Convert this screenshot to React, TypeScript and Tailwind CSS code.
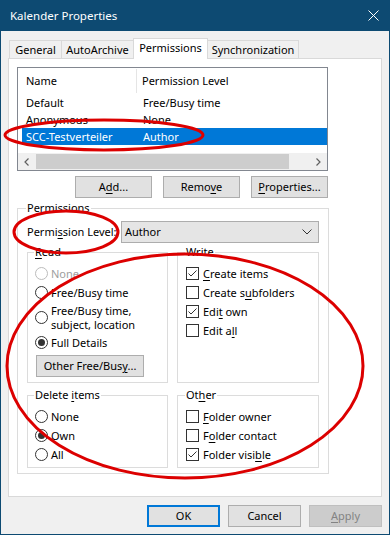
import React from 'react';

// Outlook folder properties dialog, Permissions tab.

function U({ children }: { children: React.ReactNode }) {
  return <span className="underline decoration-1 underline-offset-2">{children}</span>;
}

function Radio({ checked = false, disabled = false }: { checked?: boolean; disabled?: boolean }) {
  return (
    <span
      className={`w-[13px] h-[13px] shrink-0 rounded-full border bg-white flex items-center justify-center ${
        disabled ? 'border-[#bcbcbc]' : 'border-[#333333]'
      }`}
    >
      {checked && <span className="w-[7px] h-[7px] rounded-full bg-[#333333]" />}
    </span>
  );
}

function Check({ checked = false }: { checked?: boolean }) {
  return (
    <span className="w-[13px] h-[13px] shrink-0 border border-[#333333] bg-white flex items-center justify-center">
      {checked && (
        <svg width="11" height="11" viewBox="0 0 11 11">
          <polyline points="1.5,5.5 4,8 9.5,2.5" fill="none" stroke="#333333" strokeWidth="1" />
        </svg>
      )}
    </span>
  );
}

function Btn({ children, className = '' }: { children: React.ReactNode; className?: string }) {
  return (
    <div className={`h-[22px] border border-[#adadad] bg-[#e1e1e1] flex items-center justify-center ${className}`}>
      {children}
    </div>
  );
}

function Group({ label, className, children }: { label: React.ReactNode; className: string; children: React.ReactNode }) {
  return (
    <fieldset className={`border border-[#dcdcdc] ${className}`}>
      <legend className="leading-[16px] px-px -ml-px">{label}</legend>
      <div className="mt-[4px] flex flex-col">{children}</div>
    </fieldset>
  );
}

function RadioRow({ children, checked, disabled }: { children: React.ReactNode; checked?: boolean; disabled?: boolean }) {
  return (
    <div className={`h-[19px] flex items-center gap-[3px] ${disabled ? 'text-[#a0a0a0]' : ''}`}>
      <Radio checked={checked} disabled={disabled} />
      <span>{children}</span>
    </div>
  );
}

function CheckRow({ children, checked }: { children: React.ReactNode; checked?: boolean }) {
  return (
    <div className="h-[19px] flex items-center gap-[4px]">
      <Check checked={checked} />
      <span>{children}</span>
    </div>
  );
}

const rows = [
  { name: 'Default', level: 'Free/Busy time' },
  { name: 'Anonymous', level: 'None' },
  { name: 'SCC-Testverteiler', level: 'Author', selected: true },
];

export default function App() {
  return (
    <div className="relative w-[390px] h-[535px] bg-[#0d4a72] flex flex-col px-px pb-px font-['Noto_Sans',sans-serif] text-[11px] leading-[16px] text-black whitespace-nowrap">
      <div className="h-[31px] shrink-0 -mx-px flex items-center justify-between pl-[10px] pr-[11px] text-white text-[11.5px]">
        <span>Kalender Properties</span>
        <svg width="11" height="11" viewBox="0 0 11 11">
          <path d="M0.5 0.5 L10.5 10.5 M10.5 0.5 L0.5 10.5" stroke="#ffffff" strokeWidth="1" />
        </svg>
      </div>

      <div className="flex-1 bg-[#f0f0f0] flex flex-col">
        {/* tab strip */}
        <div className="mt-[7px] ml-[8px] h-[20px] flex items-end">
          <div className="w-[52px] h-[18px] border-t border-l border-[#d9d9d9] flex items-center justify-center pt-px">General</div>
          <div className="w-[72px] h-[18px] border-t border-l border-[#d9d9d9] flex items-center justify-center pt-px">AutoArchive</div>
          <div className="relative z-10 w-[75px] h-[21px] -mb-px border-t border-l border-r border-[#d9d9d9] bg-white flex items-center justify-center pb-[2px]">
            Permissions
          </div>
          <div className="w-[91px] h-[18px] border-t border-r border-[#d9d9d9] flex items-center justify-center pt-px">Synchronization</div>
        </div>

        {/* tab page */}
        <div className="ml-[7px] w-[374px] h-[439px] border border-[#d9d9d9] bg-white pl-[8px] pt-[8px]">
          <div className="w-[311px] h-[104px] border border-[#828790] flex flex-col">
            <div className="h-[26px] flex items-center">
              <div className="w-[119px] h-[24px] pl-[8px] border-r border-[#e5e5e5] flex items-center">Name</div>
              <div className="pl-[5px]">Permission Level</div>
            </div>
            {rows.map((r) => (
              <div
                key={r.name}
                className={`h-[17px] ml-[4px] flex items-center ${r.selected ? 'bg-[#0078d7] text-white' : ''}`}
              >
                <div className="w-[116px] pl-[4px]">{r.name}</div>
                <div className="pl-[5px]">{r.level}</div>
              </div>
            ))}
            <div className="flex-1" />
            <div className="h-[17px] bg-[#f0f0f0] flex items-center">
              <div className="w-[17px] h-[17px] flex items-center justify-center">
                <svg width="5" height="8" viewBox="0 0 5 8">
                  <polyline points="4.5,0.5 1,4 4.5,7.5" fill="none" stroke="#606060" strokeWidth="1.2" />
                </svg>
              </div>
              <div className="flex-1 h-[17px] flex items-center">
                <div className="ml-px w-[253px] h-[15px] bg-[#cdcdcd]" />
              </div>
              <div className="w-[17px] h-[17px] flex items-center justify-center">
                <svg width="5" height="8" viewBox="0 0 5 8">
                  <polyline points="0.5,0.5 4,4 0.5,7.5" fill="none" stroke="#606060" strokeWidth="1.2" />
                </svg>
              </div>
            </div>
          </div>

          <div className="mt-[5px] w-[311px] flex justify-end gap-[11px]">
            <Btn className="w-[77px]">
              <span>A<U>d</U>d...</span>
            </Btn>
            <Btn className="w-[77px]">
              <span>Remo<U>v</U>e</span>
            </Btn>
            <Btn className="w-[77px]">
              <span><U>P</U>roperties...</span>
            </Btn>
          </div>

          <fieldset className="mt-[2px] w-[311px] h-[274px] border border-[#dcdcdc] px-[9px]">
            <legend className="leading-[16px] px-px -ml-px">Permissions</legend>
            <div className="mt-[5px] h-[22px] flex items-center">
              <div className="w-[94px]">Permi<U>s</U>sion Level:</div>
              <div className="w-[198px] h-[22px] border border-[#adadad] bg-[#e5e5e5] flex items-center justify-between pl-[3px] pr-[6px]">
                <span>Author</span>
                <svg width="10" height="6" viewBox="0 0 10 6">
                  <polyline points="0.5,0.5 5,5 9.5,0.5" fill="none" stroke="#333333" strokeWidth="1" />
                </svg>
              </div>
            </div>

            <div className="mt-px flex gap-[9px]">
              <Group label={<span><U>R</U>ead</span>} className="w-[141px] h-[139px] pl-[7px]">
                <RadioRow disabled>None</RadioRow>
                <RadioRow>Free/Busy time</RadioRow>
                <div className="h-[31px] flex items-center gap-[3px]">
                  <Radio />
                  <span className="leading-[14px]">
                    Free/Busy time,
                    <br />
                    subject, location
                  </span>
                </div>
                <RadioRow checked>Full Details</RadioRow>
                <Btn className="mt-[3px] ml-px w-[108px] h-[21px]">
                  <span>Other Free/Bus<U>y</U>...</span>
                </Btn>
              </Group>
              <Group label="Write" className="w-[142px] h-[139px] pl-[8px]">
                <CheckRow checked><U>C</U>reate items</CheckRow>
                <CheckRow>Create s<U>u</U>bfolders</CheckRow>
                <CheckRow checked>Edi<U>t</U> own</CheckRow>
                <CheckRow>Edit a<U>l</U>l</CheckRow>
              </Group>
            </div>

            <div className="mt-[4px] flex gap-[9px]">
              <Group label={<span>Delete <U>i</U>tems</span>} className="w-[141px] h-[81px] pl-[7px]">
                <RadioRow>None</RadioRow>
                <RadioRow checked>Own</RadioRow>
                <RadioRow>All</RadioRow>
              </Group>
              <Group label={<span>Ot<U>h</U>er</span>} className="w-[142px] h-[81px] pl-[8px]">
                <CheckRow><U>F</U>older owner</CheckRow>
                <CheckRow>F<U>o</U>lder contact</CheckRow>
                <CheckRow checked>Folder visi<U>b</U>le</CheckRow>
              </Group>
            </div>
          </fieldset>
        </div>

        {/* dialog buttons */}
        <div className="mt-[8px] pr-[7px] flex justify-end gap-[8px]">
          <div className="w-[73px] h-[22px] border-2 border-[#0078d7] bg-[#e1e1e1] flex items-center justify-center">OK</div>
          <Btn className="w-[73px]">Cancel</Btn>
          <div className="w-[73px] h-[22px] border border-[#bfbfbf] bg-[#cccccc] text-[#838383] flex items-center justify-center">
            <span><U>A</U>pply</span>
          </div>
        </div>
      </div>

      {/* red annotation marks drawn over the screenshot */}
      <svg className="absolute left-0 top-0 pointer-events-none" width="390" height="535" viewBox="0 0 390 535">
        <g fill="none" stroke="#dc0000" strokeWidth="3">
          <ellipse cx="104" cy="135" rx="99" ry="15" />
          <ellipse cx="66" cy="232" rx="52" ry="21" />
          <ellipse cx="185" cy="366" rx="178" ry="112" />
        </g>
      </svg>
    </div>
  );
}
